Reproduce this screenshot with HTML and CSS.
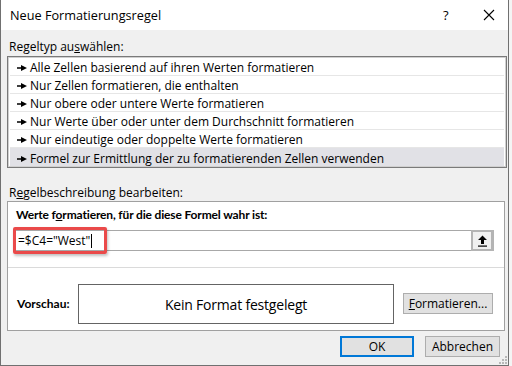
FILE: index.html
```html
<!DOCTYPE html>
<html>

<head>
    <title>Neue Formatierungsregel</title>
    <link rel="stylesheet" href="styles.css">
</head>

<body>
    <div class="window">
        <!-- Title bar -->
        <div class="titlebar">
            <span class="title">Neue Formatierungsregel</span>
            <span class="help">?</span>
            <span class="close">
                <svg width="12" height="12" viewBox="0 0 12 12">
                    <path d="M1 1 L11 11 M11 1 L1 11" stroke="#000" stroke-width="1.1" fill="none" />
                </svg>
            </span>
        </div>

        <div class="content">
            <div class="section-label">Regeltyp au<u>s</u>wählen:</div>
            <ul class="rule-list">
                <li class="rule-item"><svg class="bullet" width="10" height="6" viewBox="0 0 10 6"><path d="M0 2.3 H5 V3.7 H0 Z M4 0 L10 3 L4 6 Z" fill="#000" /></svg>Alle Zellen basierend auf ihren Werten formatieren</li>
                <li class="rule-item"><svg class="bullet" width="10" height="6" viewBox="0 0 10 6"><path d="M0 2.3 H5 V3.7 H0 Z M4 0 L10 3 L4 6 Z" fill="#000" /></svg>Nur Zellen formatieren, die enthalten</li>
                <li class="rule-item"><svg class="bullet" width="10" height="6" viewBox="0 0 10 6"><path d="M0 2.3 H5 V3.7 H0 Z M4 0 L10 3 L4 6 Z" fill="#000" /></svg>Nur obere oder untere Werte formatieren</li>
                <li class="rule-item"><svg class="bullet" width="10" height="6" viewBox="0 0 10 6"><path d="M0 2.3 H5 V3.7 H0 Z M4 0 L10 3 L4 6 Z" fill="#000" /></svg>Nur Werte über oder unter dem Durchschnitt formatieren</li>
                <li class="rule-item"><svg class="bullet" width="10" height="6" viewBox="0 0 10 6"><path d="M0 2.3 H5 V3.7 H0 Z M4 0 L10 3 L4 6 Z" fill="#000" /></svg>Nur eindeutige oder doppelte Werte formatieren</li>
                <li class="rule-item selected"><svg class="bullet" width="10" height="6" viewBox="0 0 10 6"><path d="M0 2.3 H5 V3.7 H0 Z M4 0 L10 3 L4 6 Z" fill="#000" /></svg>Formel zur Ermittlung der zu formatierenden Zellen verwenden</li>
            </ul>

            <div class="section-label second">R<u>e</u>gelbeschreibung bearbeiten:</div>
            <div class="rule-box">
                <div class="formula-label">Werte f<u>o</u>rmatieren, für die diese Formel wahr ist:</div>
                <div class="formula-input">
                    <span class="formula-text">=$C4="West"</span><span class="caret"></span>
                    <span class="collapse-btn">
                        <svg width="11" height="12" viewBox="0 0 11 12">
                            <path d="M5.5 0.5 L10 5 H7 V9 H4 V5 H1 Z" fill="#000" />
                            <rect x="1" y="10.5" width="9" height="1.2" fill="#000" />
                        </svg>
                    </span>
                    <div class="highlight"></div>
                </div>
                <div class="preview-row">
                    <span class="preview-label">Vorschau:</span>
                    <div class="preview-box">Kein Format festgelegt</div>
                    <button class="btn format-btn"><u>F</u>ormatieren...</button>
                </div>
            </div>

            <div class="dialog-buttons">
                <button class="btn ok-btn">OK</button>
                <button class="btn">Abbrechen</button>
            </div>
        </div>
        <svg class="grip" width="8" height="8" viewBox="0 0 8 8">
            <rect x="6" y="0" width="2" height="2" fill="#b8b8b8" />
            <rect x="3" y="3" width="2" height="2" fill="#b8b8b8" />
            <rect x="6" y="3" width="2" height="2" fill="#b8b8b8" />
            <rect x="0" y="6" width="2" height="2" fill="#b8b8b8" />
            <rect x="3" y="6" width="2" height="2" fill="#b8b8b8" />
            <rect x="6" y="6" width="2" height="2" fill="#b8b8b8" />
        </svg>
    </div>
</body>

</html>
```

FILE: styles.css
```css
body {
    margin: 0;
    background-color: #f4f4f4;
    font-family: 'Open Sans', 'Noto Sans', sans-serif;
    font-size: 12px;
    color: #000;
}

.window {
    position: relative;
    width: 507px;
    height: 365px;
    border: 1px solid #707070;
    border-top: none;
    background-color: #f0f0f0;
    display: flex;
    flex-direction: column;
}

.titlebar {
    height: 30px;
    background-color: #fff;
    display: flex;
    align-items: center;
    padding-left: 9px;
}

.title {
    flex: 1;
    font-size: 12.7px;
}

.help {
    font-size: 13px;
    width: 40px;
    padding-left: 5px;
}

.close {
    width: 25px;
    display: flex;
}

.content {
    flex: 1;
    padding: 9px 7px 0 6px;
}

.section-label {
    line-height: 16px;
    height: 16px;
    padding-left: 2px;
}

.section-label.second {
    margin-top: 17px;
}

.rule-list {
    list-style: none;
    margin: 1px 0 0 0;
    padding: 1px 1px;
    width: 496px;
    background-color: #fff;
    border: 1px solid #7a7a7a;
    box-shadow: inset 0 0 0 1px #d0d0d0;
}

.rule-item {
    height: 14px;
    line-height: 14px;
    padding-top: 3px;
    border-bottom: 1px solid #e6e6e6;
    margin: 0 1px;
    padding-left: 7px;
    display: flex;
    align-items: center;
}

.rule-item:last-child {
    border-bottom: none;
    height: 15px;
}

.rule-item.selected {
    background-color: #e1e1e6;
}

.bullet {
    margin-right: 3px;
    flex-shrink: 0;
}

.rule-box {
    width: 496px;
    height: 128px;
    background-color: #fff;
    border: 1px solid #a0a0a0;
}

.formula-label {
    font-family: 'Lato', sans-serif;
    font-weight: bold;
    letter-spacing: -0.15px;
    line-height: 16px;
    padding: 5px 0 0 8px;
}

.formula-input {
    position: relative;
    margin: 7px 10px 0 7px;
    height: 19px;
    border: 1px solid #a8a8a8;
    display: flex;
    align-items: center;
    padding-left: 2px;
}

.caret {
    width: 1px;
    height: 14px;
    background-color: #000;
    margin-left: 1px;
}

.collapse-btn {
    margin-left: auto;
    width: 18px;
    height: 17px;
    border: 2px solid #b4b4b4;
    border-right-width: 3px;
    background-color: #f0f0f0;
    display: flex;
    align-items: center;
    justify-content: center;
    margin-right: -1px;
}

.highlight {
    position: absolute;
    left: -3px;
    top: -4px;
    width: 88px;
    height: 21px;
    border: 3px solid #ea4a4a;
    border-radius: 2px;
    box-shadow: 1px 2px 3px rgba(0, 0, 0, 0.25);
}

.preview-row {
    margin-top: 16px;
    border-top: 1px solid #dadada;
    padding: 16px 0 0 9px;
    display: flex;
    align-items: flex-start;
}

.preview-label {
    font-family: 'Lato', sans-serif;
    font-weight: bold;
    width: 61px;
    margin-top: 12px;
}

.preview-box {
    width: 314px;
    height: 38px;
    border: 1px solid #646464;
    display: flex;
    align-items: center;
    justify-content: center;
    font-size: 14px;
    letter-spacing: -0.2px;
}

.btn {
    font-family: 'Open Sans', 'Noto Sans', sans-serif;
    font-size: 12px;
    background-color: #e1e1e1;
    border: 1px solid #adadad;
    color: #000;
    height: 21px;
    padding: 0;
}

.format-btn {
    width: 90px;
    margin: 9px 0 0 9px;
}

.dialog-buttons {
    display: flex;
    justify-content: flex-end;
    gap: 11px;
    margin-top: 5px;
    padding-right: 1px;
}

.dialog-buttons .btn {
    width: 75px;
}

.dialog-buttons .ok-btn {
    width: 74px;
    border: 2px solid #0078d7;
}

.grip {
    position: absolute;
    right: 1px;
    bottom: 1px;
}
```
